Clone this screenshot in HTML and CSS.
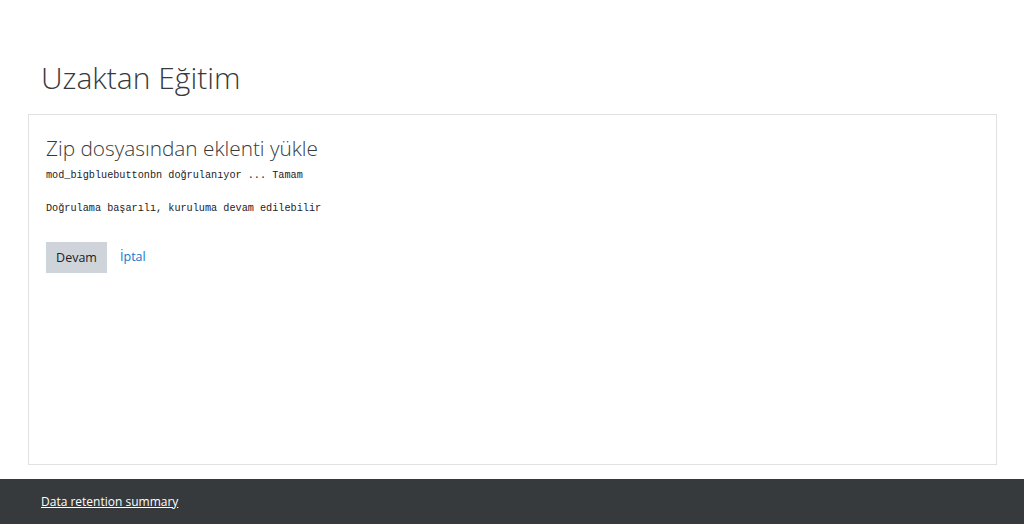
FILE: index.html
```html
<!DOCTYPE html>
<html lang="tr">
<head>
<meta charset="UTF-8">
<meta name="viewport" content="width=device-width, initial-scale=1.0">
<title>Uzaktan Eğitim</title>
<link rel="stylesheet" href="styles.css">
</head>
<body>
<div class="page">
    <header class="page-header">
        <h1>Uzaktan Eğitim</h1>
    </header>
    <div class="card">
        <h2>Zip dosyasından eklenti yükle</h2>
        <pre class="log">mod_bigbluebuttonbn doğrulanıyor ... Tamam

Doğrulama başarılı, kuruluma devam edilebilir</pre>
        <div class="actions">
            <button class="btn">Devam</button>
            <a href="#" class="cancel">İptal</a>
        </div>
    </div>
</div>
<footer class="footer">
    <a href="#">Data retention summary</a>
</footer>
</body>
</html>
```

FILE: styles.css
```css
body {
    margin: 0;
    font-family: "Open Sans", "Noto Sans", sans-serif;
    color: #373a3c;
    background: #fff;
}
.page {
    padding: 0 27px 14px 28px;
}
.page-header {
    padding: 56px 0 0 13px;
    height: 58px;
}
.page-header h1 {
    margin: 0;
    font-weight: 300;
    font-size: 30px;
    line-height: 44px;
    color: #373a3c;
}
.card {
    border: 1px solid #e1e1e1;
    height: 349px;
    padding: 0 17px;
}
.card h2 {
    margin: 19px 0 0;
    font-weight: 300;
    font-size: 20.8px;
    line-height: 28px;
}
.log {
    margin: 6px 0 0;
    font-family: "Liberation Mono", "DejaVu Sans Mono", monospace;
    font-size: 10.2px;
    line-height: 16.5px;
    color: #1d2125;
}
.actions {
    display: flex;
    align-items: center;
    gap: 13px;
    margin-top: 24px;
}
.btn {
    font-family: inherit;
    font-size: 12.5px;
    color: #1d2125;
    background: #ced4da;
    border: none;
    border-radius: 0;
    height: 31px;
    width: 61px;
    padding: 0;
}
.cancel {
    font-size: 12.5px;
    color: #1177d1;
    text-decoration: none;
    margin-top: -1px;
}
.footer {
    background: #373a3c;
    height: 45px;
    padding: 0 41px;
    display: flex;
    align-items: center;
}
.footer a {
    color: #fff;
    font-size: 12px;
    text-decoration: underline;
}
```
